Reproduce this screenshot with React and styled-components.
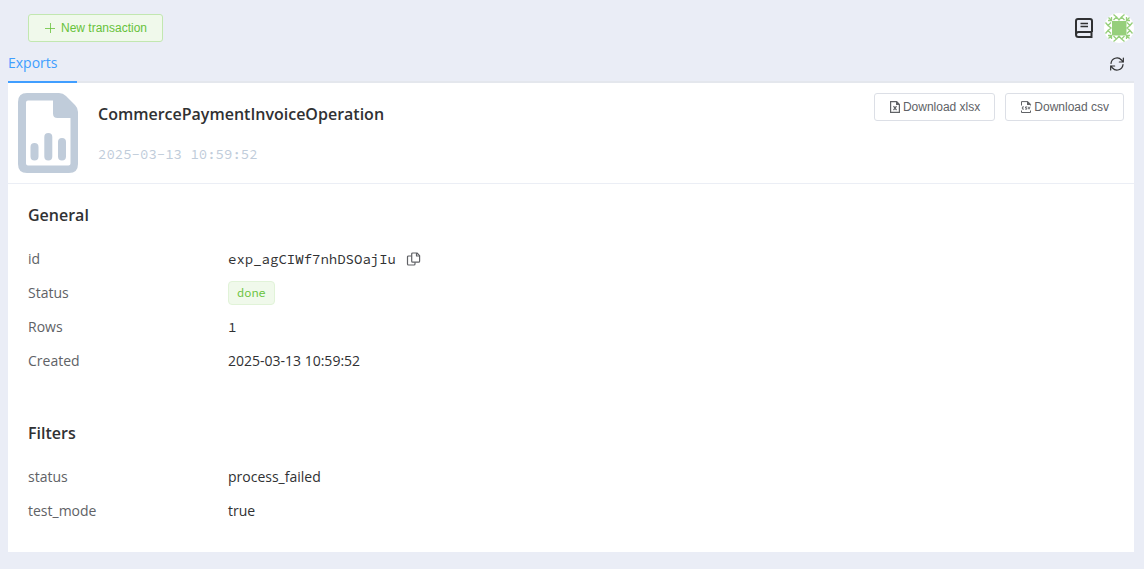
import React from "react";
import styled, { createGlobalStyle } from "styled-components";

const sans = '"Open Sans", "Noto Sans", sans-serif';
const mono = '"Source Code Pro", "Liberation Mono", monospace';

const GlobalStyle = createGlobalStyle`
  * { box-sizing: border-box; }
  body {
    margin: 0;
    background: #eaedf6;
    color: #303133;
    font: 400 14px/24px ${sans};
  }
`;

const Page = styled.div`
  padding: 0 10px 16px 8px;
`;

const Toolbar = styled.header`
  display: flex;
  align-items: center;
  justify-content: space-between;
  padding: 13px 0 0 20px;
`;

const Tools = styled.div`
  display: flex;
  align-items: center;
  gap: 10px;
`;

const Button = styled.button`
  display: inline-flex;
  align-items: center;
  justify-content: center;
  gap: ${(p) => (p.$primary ? 5 : 2)}px;
  height: 28px;
  padding: 0 ${(p) => (p.$primary ? 15 : 14)}px;
  border: 1px solid ${(p) => (p.$primary ? "#c2e7b0" : "#dcdfe6")};
  border-radius: 3px;
  background: ${(p) => (p.$primary ? "#f0f9eb" : "#fff")};
  color: ${(p) => (p.$primary ? "#67c23a" : "#606266")};
  font: 400 12px/12px "Liberation Sans", Arial, sans-serif;
  white-space: nowrap;
  cursor: pointer;
`;

const IconButton = styled.button`
  display: inline-flex;
  padding: 0;
  border: 0;
  background: none;
  color: ${(p) => p.$color || "#303133"};
  cursor: pointer;
`;

const TabBar = styled.nav`
  display: flex;
  align-items: center;
  justify-content: space-between;
  height: 40px;
  padding: 2px 9px 0 0;
  box-shadow: inset 0 -2px 0 #e4e7ed;
`;

const Tab = styled.a`
  height: 38px;
  padding-right: 20px;
  border-bottom: 2px solid #409eff;
  color: #409eff;
  line-height: 36px;
  text-decoration: none;
`;

const Panel = styled.main`
  background: #fff;
`;

const Summary = styled.section`
  display: flex;
  align-items: flex-start;
  gap: 20px;
  padding: 10px;
  border-bottom: 1px solid #ebeef5;
`;

const Titles = styled.div`
  flex: 1;
  padding-top: 9px;
`;

const Heading = styled.h2`
  margin: 0;
  font-size: 16px;
  line-height: 24px;
  font-weight: 600;
`;

const Stamp = styled.time`
  display: block;
  margin-top: 16px;
  color: #c0ccda;
  font-family: ${mono};
`;

const Actions = styled.div`
  display: flex;
  gap: 10px;
`;

const Body = styled.div`
  display: flex;
  flex-direction: column;
  gap: 43px;
  padding: 19px 20px 24px;
`;

const List = styled.dl`
  margin: 15px 0 0;
`;

const Row = styled.div`
  display: grid;
  grid-template-columns: 200px 1fr;
  align-items: center;
  height: 34px;
`;

const Term = styled.dt`
  color: #606266;
`;

const Value = styled.dd`
  display: flex;
  align-items: center;
  gap: 10px;
  margin: 0;
  font-family: ${(p) => (p.$mono ? mono : sans)};
`;

const Tag = styled.span`
  height: 24px;
  padding: 0 8px;
  border: 1px solid #e1f3d8;
  border-radius: 4px;
  background: #f0f9eb;
  color: #67c23a;
  font-size: 12px;
  line-height: 22px;
`;

const PlusIcon = () => (
  <svg width="12" height="12" viewBox="0 0 12 12" fill="none" stroke="currentColor" strokeWidth=".8">
    <path d="M1 6.500h10M6.500 1v10" />
  </svg>
);

const BookIcon = () => (
  <svg width="20" height="22" viewBox="0 0 20 22" fill="none" stroke="currentColor" strokeWidth="2" strokeLinejoin="round">
    <path d="M18 15V4a2 2 0 0 0-2-2H4a2 2 0 0 0-2 2v13.500a2.500 2.500 0 0 0 2.500 2.500H18.500M18 15H4.500a2.500 2.500 0 0 0-2.500 2.500M17.500 15v5" />
    <path d="M6.500 6.500h7.500M6.500 9.500h7.500" strokeWidth="1.500" />
  </svg>
);

const RefreshIcon = () => (
  <svg width="16" height="16" viewBox="0 0 24 24" fill="none" stroke="currentColor" strokeWidth="1.800" strokeLinecap="round">
    <path d="M3 11a9 9 0 0 1 15.700-5L21 9M21.500 3v6h-6M21 13a9 9 0 0 1-15.700 5L3 15M2.500 21v-6h6" />
  </svg>
);

const ReportIcon = () => (
  <svg width="60" height="80" viewBox="0 0 60 80" fill="none">
    <path
      fill="#c0ccda"
      fillRule="evenodd"
      d="M9 0H41Q45 0 48 3L57 12Q60 15 60 19V71Q60 80 51 80H9Q0 80 0 71V9Q0 0 9 0ZM10 7.500Q8 7.500 8 9.500V70.500Q8 72.500 10 72.500H50.500Q52.500 72.500 52.500 70.500V25H39.500Q35 25 35 20.500V7.500Z"
    />
    <path d="M16.500 54v9.500M30.300 44v19.500M44 49v14.500" stroke="#c0ccda" strokeWidth="8" strokeLinecap="round" />
  </svg>
);

const XlsxIcon = () => (
  <svg width="12" height="12" viewBox="0 0 12 12" fill="none" stroke="currentColor" strokeWidth="1.200">
    <path d="M1.600 .6h6l2.800 2.800v8H1.600z" />
    <path d="M7 .6h1l2.400 2.400v1H7z" fill="currentColor" stroke="none" />
    <path d="M4.500 5.200l3 4M7.500 5.200l-3 4" />
  </svg>
);

const CsvIcon = () => (
  <svg width="12" height="12" viewBox="0 0 12 12" fill="none" stroke="currentColor">
    <path d="M1.500 4.500V.6h6.300l2.700 2.700v1.200M1.500 9.500v2h9v-2" />
    <path d="M7 .6h1l2.400 2.400v1H7z" fill="currentColor" stroke="none" />
    <path d="M4 5.900H2.400v2.200H4M7 5.900H5.500v1.100h1.300v1.200H5.200M8 5.700l1 2.500 1-2.500" strokeWidth=".9" />
  </svg>
);

const CopyIcon = () => (
  <svg width="16" height="16" viewBox="0 0 16 16" fill="none" stroke="currentColor" strokeWidth="1.200" strokeLinejoin="round">
    <path d="M6.700 2h4.300l2.600 2.600v5.600a1 1 0 0 1-1 1H6.700a1 1 0 0 1-1-1V3a1 1 0 0 1 1-1z" />
    <path d="M10.500 2v3h3M5.500 5H2.500a1 1 0 0 0-1 1v7a1 1 0 0 0 1 1h5.500a1 1 0 0 0 1-1v-1.800" />
  </svg>
);

const corners = [0, 90, 180, 270];

const Avatar = () => (
  <svg width="30" height="30" viewBox="0 0 30 30" role="img" aria-label="Account">
    <circle cx="15" cy="15" r="15" fill="#fff" />
    <path d="M8 8h14.500v14.500H8z" fill="#96cf7b" />
    {corners.map((angle) => (
      <g key={angle} transform={`rotate(${angle} 15 15)`} stroke="#96cf7b" strokeWidth="1.300" fill="none">
        <path d="M9.500 1.500l3 2.500-3 3M20.500 1.500l-3 2.500 3 3M12.500 4l2.500 3 2.500-3M4.500 4.500l3 3M7.500 4v3.500H4" />
      </g>
    ))}
  </svg>
);

const general = [
  {
    label: "id",
    mono: true,
    value: (
      <>
        exp_agCIWf7nhDSOajIu
        <IconButton aria-label="Copy id" $color="#606266"><CopyIcon /></IconButton>
      </>
    ),
  },
  { label: "Status", mono: true, value: <Tag>done</Tag> },
  { label: "Rows", mono: true, value: "1" },
  { label: "Created", value: "2025-03-13 10:59:52" },
];

const filters = [
  { label: "status", value: "process_failed" },
  { label: "test_mode", value: "true" },
];

const Details = ({ title, rows }) => (
  <section>
    <Heading>{title}</Heading>
    <List>
      {rows.map((row) => (
        <Row key={row.label}>
          <Term>{row.label}</Term>
          <Value $mono={row.mono}>{row.value}</Value>
        </Row>
      ))}
    </List>
  </section>
);

export default function App() {
  return (
    <>
      <GlobalStyle />
      <Page>
        <Toolbar>
          <Button $primary><PlusIcon />New transaction</Button>
          <Tools>
            <IconButton aria-label="Documentation"><BookIcon /></IconButton>
            <IconButton aria-label="Account"><Avatar /></IconButton>
          </Tools>
        </Toolbar>
        <TabBar>
          <Tab href="#exports">Exports</Tab>
          <IconButton aria-label="Refresh"><RefreshIcon /></IconButton>
        </TabBar>
        <Panel>
          <Summary>
            <ReportIcon />
            <Titles>
              <Heading>CommercePaymentInvoiceOperation</Heading>
              <Stamp>2025-03-13 10:59:52</Stamp>
            </Titles>
            <Actions>
              <Button><XlsxIcon />Download xlsx</Button>
              <Button><CsvIcon />Download csv</Button>
            </Actions>
          </Summary>
          <Body>
            <Details title="General" rows={general} />
            <Details title="Filters" rows={filters} />
          </Body>
        </Panel>
      </Page>
    </>
  );
}
